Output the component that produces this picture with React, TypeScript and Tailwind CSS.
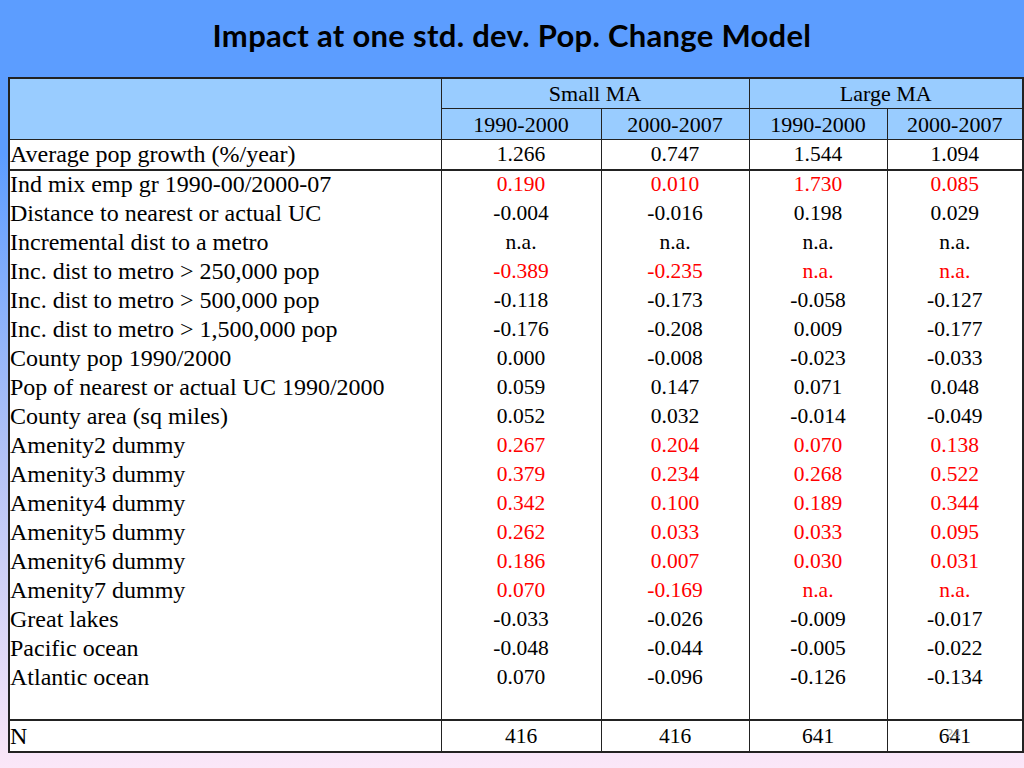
const rows: [string, string[], boolean][] = [
  ["Ind mix emp gr 1990-00/2000-07", ["0.190", "0.010", "1.730", "0.085"], true],
  ["Distance to nearest or actual UC", ["-0.004", "-0.016", "0.198", "0.029"], false],
  ["Incremental dist to a metro", ["n.a.", "n.a.", "n.a.", "n.a."], false],
  ["Inc. dist to metro > 250,000 pop", ["-0.389", "-0.235", "n.a.", "n.a."], true],
  ["Inc. dist to metro > 500,000 pop", ["-0.118", "-0.173", "-0.058", "-0.127"], false],
  ["Inc. dist to metro > 1,500,000 pop", ["-0.176", "-0.208", "0.009", "-0.177"], false],
  ["County pop 1990/2000", ["0.000", "-0.008", "-0.023", "-0.033"], false],
  ["Pop of nearest or actual UC 1990/2000", ["0.059", "0.147", "0.071", "0.048"], false],
  ["County area (sq miles)", ["0.052", "0.032", "-0.014", "-0.049"], false],
  ["Amenity2 dummy", ["0.267", "0.204", "0.070", "0.138"], true],
  ["Amenity3 dummy", ["0.379", "0.234", "0.268", "0.522"], true],
  ["Amenity4 dummy", ["0.342", "0.100", "0.189", "0.344"], true],
  ["Amenity5 dummy", ["0.262", "0.033", "0.033", "0.095"], true],
  ["Amenity6 dummy", ["0.186", "0.007", "0.030", "0.031"], true],
  ["Amenity7 dummy", ["0.070", "-0.169", "n.a.", "n.a."], true],
  ["Great lakes", ["-0.033", "-0.026", "-0.009", "-0.017"], false],
  ["Pacific ocean", ["-0.048", "-0.044", "-0.005", "-0.022"], false],
  ["Atlantic ocean", ["0.070", "-0.096", "-0.126", "-0.134"], false],
];

const cell = "border border-[#222] p-0";
const label = `${cell} text-left text-[24px]`;
const num = `${cell} text-center text-[21.5px]`;
const head = `${cell} font-normal text-[22px]`;

export default function App() {
  return (
    <div className="relative h-[768px] w-[1024px] overflow-hidden bg-gradient-to-b from-[#5c9dff] from-20% via-[#b4c3f6] via-60% to-[#fbe7f8] text-black">
      <div className="flex h-[77px] items-center justify-center pb-[6px]">
        <h1 className="font-['Lato',sans-serif] text-[31px] font-bold tracking-[0.3px] text-black">
          Impact at one std. dev. Pop. Change Model
        </h1>
      </div>
      <table className="ml-[8px] table-fixed border-collapse border-2 border-[#222] font-['Liberation_Serif',serif] leading-[29px]">
        <colgroup>
          <col className="w-[432px]" />
          <col className="w-[160px]" />
          <col className="w-[148px]" />
          <col className="w-[138px]" />
          <col className="w-[136px]" />
        </colgroup>
        <thead className="bg-[#99ccff]">
          <tr className="h-[30px]">
            <th rowSpan={2} className={cell}></th>
            <th colSpan={2} className={head}>Small MA</th>
            <th colSpan={2} className={head}>Large MA</th>
          </tr>
          <tr className="h-[31px]">
            <th className={head}>1990-2000</th>
            <th className={head}>2000-2007</th>
            <th className={head}>1990-2000</th>
            <th className={head}>2000-2007</th>
          </tr>
        </thead>
        <tbody className="bg-white">
          <tr className="h-[30px] border-b-2 border-[#222]">
            <td className={label}>Average pop growth (%/year)</td>
            <td className={num}>1.266</td>
            <td className={num}>0.747</td>
            <td className={num}>1.544</td>
            <td className={num}>1.094</td>
          </tr>
          <tr className="h-[550px] border-b-2 border-[#222]">
            <td className={`${label} align-top`}>
              {rows.map(([name]) => (
                <div key={name} className="h-[29px] whitespace-nowrap leading-[27px]">{name}</div>
              ))}
            </td>
            {[0, 1, 2, 3].map((c) => (
              <td key={c} className={`${num} align-top`}>
                {rows.map(([name, vals, red]) => (
                  <div key={name} className={`h-[29px] leading-[27px] ${red ? "text-[#ff0000]" : ""}`}>
                    {vals[c]}
                  </div>
                ))}
              </td>
            ))}
          </tr>
          <tr className="h-[32px]">
            <td className={label}>N</td>
            <td className={num}>416</td>
            <td className={num}>416</td>
            <td className={num}>641</td>
            <td className={num}>641</td>
          </tr>
        </tbody>
      </table>
      <span className="absolute left-[946px] top-[724px] font-['Liberation_Sans',sans-serif] text-[13px] text-[#8a8a8a]/70">
        24
      </span>
    </div>
  );
}
